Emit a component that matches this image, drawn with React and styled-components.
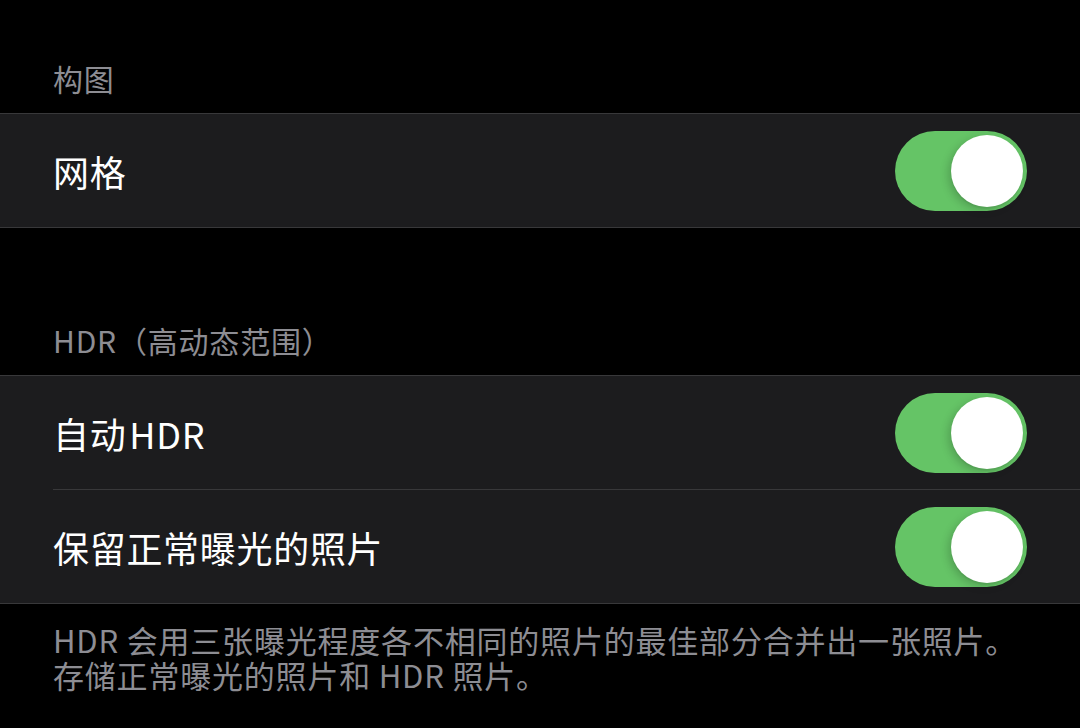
import React from "react";
import styled, { createGlobalStyle } from "styled-components";

const Global = createGlobalStyle`
  html, body { margin: 0; padding: 0; background: #000; }
  body { font-family: "Noto Sans CJK SC", "Noto Sans", sans-serif; -webkit-font-smoothing: antialiased; }
`;

const Page = styled.div`
  width: 1080px;
  min-height: 728px;
  background: #000;
  display: flex;
  flex-direction: column;
`;

const SectionHeader = styled.div`
  padding: ${(p) => p.$top}px 53px 15px;
  font-size: 30px;
  letter-spacing: 0.8px;
  line-height: 40px;
  color: #8d8d93;
`;

const Group = styled.div`
  background: #1c1c1e;
  border-top: 1px solid #38383a;
  border-bottom: 1px solid #38383a;
  display: flex;
  flex-direction: column;
`;

const Row = styled.div`
  height: 113px;
  display: flex;
  align-items: center;
  justify-content: space-between;
  padding-right: 53px;
  margin-left: 53px;
  border-top: ${(p) => (p.$divider ? "1px solid #38383a" : "none")};
`;

const Label = styled.span`
  font-size: 36px;
  letter-spacing: 0.7px;
  color: #fff;
  line-height: 44px;
`;

const Track = styled.div`
  width: 132px;
  height: 80px;
  border-radius: 40px;
  background: #65c466;
  display: flex;
  align-items: center;
  justify-content: flex-end;
  padding: 0 4px;
  box-sizing: border-box;
`;

const Knob = styled.div`
  width: 72px;
  height: 72px;
  border-radius: 50%;
  background: #fff;
  box-shadow: -3px 3px 8px rgba(0, 0, 0, 0.18), 0 2px 1px rgba(0, 0, 0, 0.05);
`;

const Footer = styled.div`
  padding: 18px 53px 0;
  font-size: 31px;
  letter-spacing: 0.8px;
  line-height: 35px;
  color: #8d8d93;
`;

const Toggle = () => (
  <Track>
    <Knob />
  </Track>
);

export default function App() {
  return (
    <Page>
      <Global />
      <SectionHeader $top={58}>构图</SectionHeader>
      <Group>
        <Row>
          <Label>网格</Label>
          <Toggle />
        </Row>
      </Group>
      <SectionHeader $top={92}>HDR（高动态范围）</SectionHeader>
      <Group>
        <Row>
          <Label>{"自动\u200aHDR"}</Label>
          <Toggle />
        </Row>
        <Row $divider>
          <Label>保留正常曝光的照片</Label>
          <Toggle />
        </Row>
      </Group>
      <Footer>
        HDR 会用三张曝光程度各不相同的照片的最佳部分合并出一张照片。
        <br />
        存储正常曝光的照片和 HDR 照片。
      </Footer>
    </Page>
  );
}
